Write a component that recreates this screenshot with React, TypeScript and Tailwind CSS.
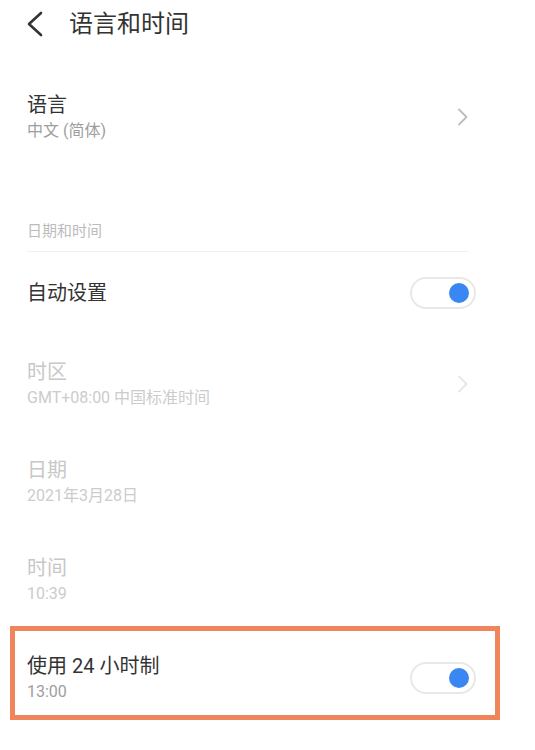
import React from 'react';

const font = {fontFamily: 'Roboto, "Noto Sans CJK SC", sans-serif'};

const Chevron: React.FC<{light?: boolean}> = ({light}) => (
  <svg width="12" height="18" viewBox="0 0 12 18" className="mr-[7px]">
    <path
      d="M2 1.5 L9.5 9 L2 16.5"
      fill="none"
      stroke={light ? '#e6e6e6' : '#bdbdbd'}
      strokeWidth="1.8"
      strokeLinecap="round"
      strokeLinejoin="round"
    />
  </svg>
);

const Toggle: React.FC = () => (
  <div className="flex h-[32px] w-[66px] items-center justify-end rounded-full border-2 border-[#e8e8e8] bg-white pr-[5px]">
    <div className="h-[20px] w-[20px] rounded-full bg-[#3a87f4]" />
  </div>
);

type RowProps = {
  title: string;
  sub?: string;
  disabled?: boolean;
  right?: React.ReactNode;
};

const Row: React.FC<RowProps> = ({title, sub, disabled, right}) => (
  <div className="flex w-[449px] items-center justify-between">
    <div className="flex flex-col">
      <div className={`text-[20px] leading-[26px] ${disabled ? 'text-[#c8c8c8]' : 'text-[#333333]'}`}>{title}</div>
      {sub && (
        <div className={`mt-[3px] text-[16px] leading-[20px] ${disabled ? 'text-[#cccccc]' : 'text-[#9e9e9e]'}`}>{sub}</div>
      )}
    </div>
    {right}
  </div>
);

const App: React.FC = () => {
  return (
    <div className="h-[750px] w-[535px] overflow-hidden bg-white" style={font}>
      <div className="flex h-[48px] items-center pl-[26px]">
        <svg width="18" height="26" viewBox="0 0 18 26">
          <path d="M15 2 L3 13 L15 24" fill="none" stroke="#333" strokeWidth="2.6" strokeLinecap="round" strokeLinejoin="round" />
        </svg>
        <div className="ml-[25px] text-[24px] leading-[30px] text-[#333333]">语言和时间</div>
      </div>

      <div className="flex flex-col pl-[27px]">
        <div className="mt-[44px]">
          <Row title="语言" sub="中文 (简体)" right={<Chevron />} />
        </div>

        <div className="mt-[80px] text-[15px] leading-[20px] text-[#bcbcbc]">日期和时间</div>
        <div className="mt-[10px] h-px w-[441px] bg-[#f0f0f0]" />

        <div className="mt-[25px] flex h-[32px] items-center">
          <Row title="自动设置" right={<Toggle />} />
        </div>

        <div className="mt-[50px]">
          <Row title="时区" sub="GMT+08:00 中国标准时间" disabled right={<Chevron light />} />
        </div>
        <div className="mt-[49px]">
          <Row title="日期" sub="2021年3月28日" disabled />
        </div>
        <div className="mt-[49px]">
          <Row title="时间" sub="10:39" disabled />
        </div>
      </div>

      <div className="ml-[10px] mt-[22px] w-[490px] border-[5px] border-[#f0855c] pb-[13px] pl-[12px] pt-[22px]">
        <Row title="使用 24 小时制" sub="13:00" right={<Toggle />} />
      </div>
    </div>
  );
};

export default App;
